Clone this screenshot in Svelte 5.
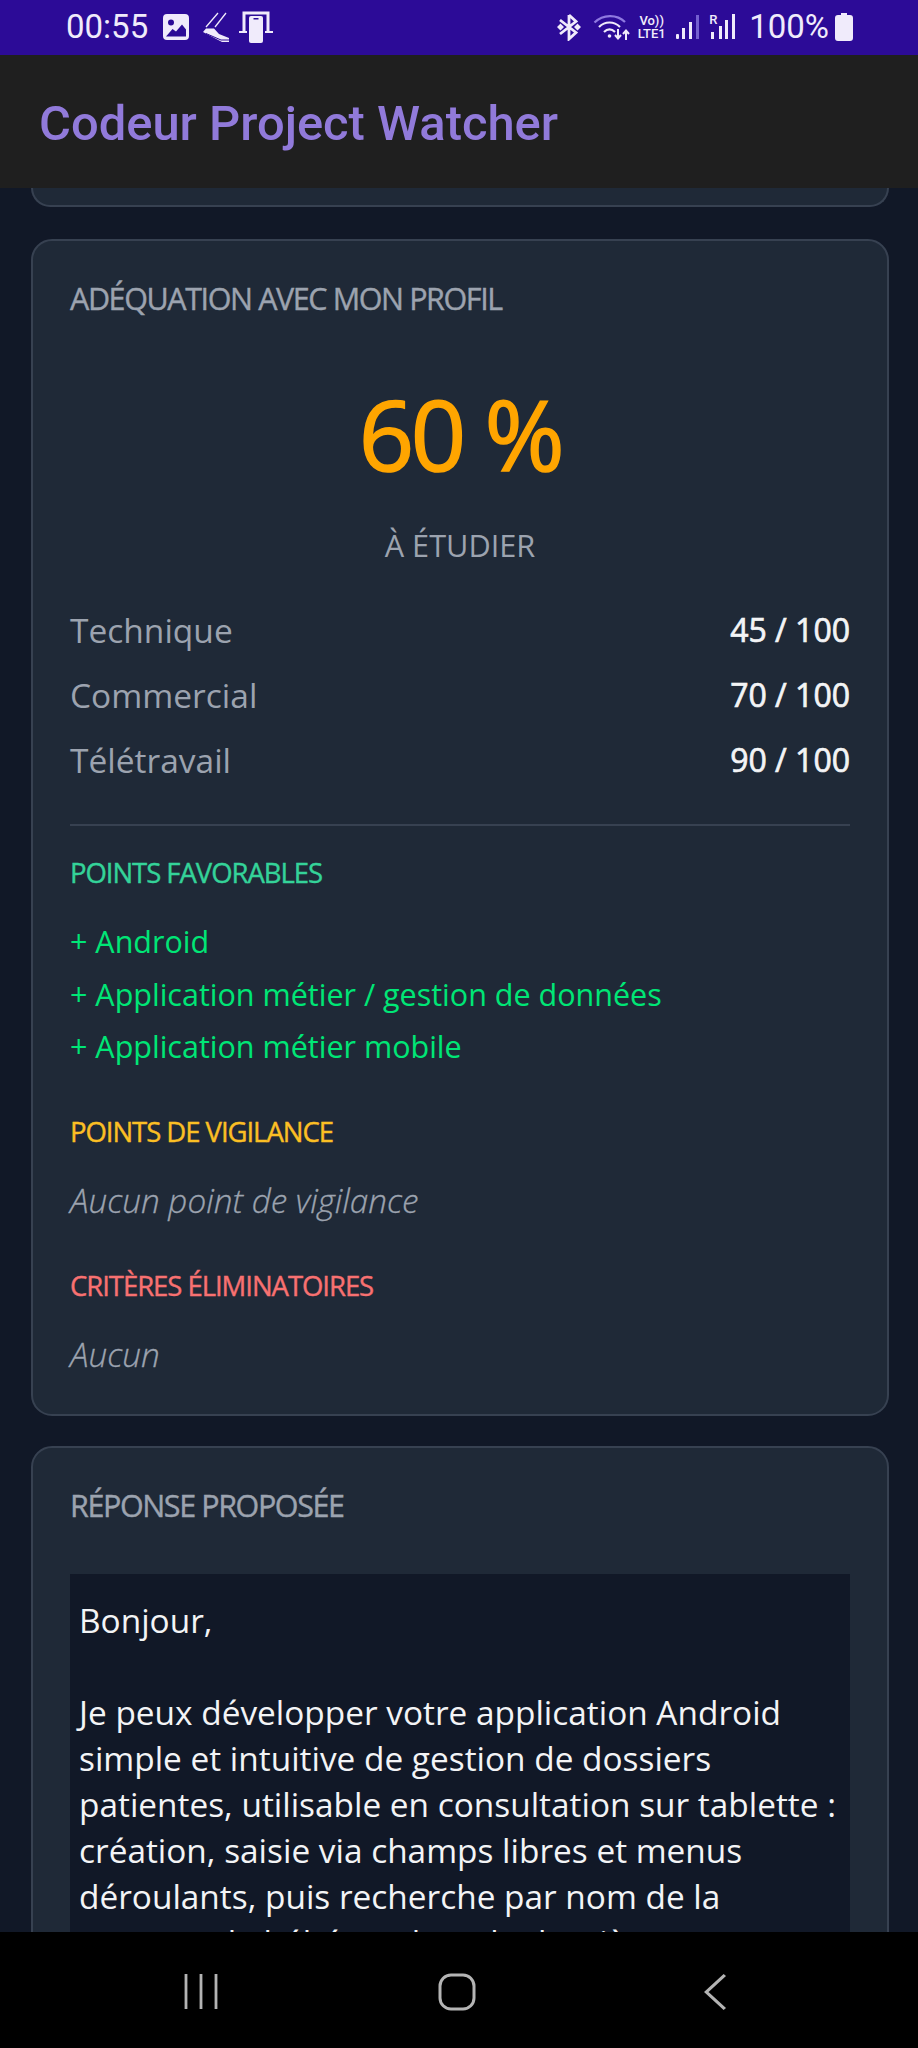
<script>
  const scores = [
    { label: 'Technique', value: '45 / 100' },
    { label: 'Commercial', value: '70 / 100' },
    { label: 'Télétravail', value: '90 / 100' }
  ];
  const favorable = ['Android', 'Application métier / gestion de données', 'Application métier mobile'];
</script>

<div class="phone">
  <header class="status">
    <div class="status-left">
      <span class="clock">00:55</span>
      <svg class="ic-gallery" viewBox="0 0 26 26"><path fill-rule="evenodd" fill="#f0ebfb" d="M4 0h18a4 4 0 0 1 4 4v18a4 4 0 0 1-4 4H4a4 4 0 0 1-4-4V4a4 4 0 0 1 4-4zM8 5.500a3 3 0 1 0 0 6 3 3 0 0 0 0-6zM3 22.500h20v-7l-4-5-6 7-3.500-2.500z"/></svg>
      <svg class="ic-shoe" viewBox="0 0 28 31"><path d="M16 1 4 15M24 1 13 15" stroke="#f0ebfb" stroke-width="1.300" fill="none"/><path fill="#f0ebfb" d="M1 20 4 16.500 12 16.500 17 22 27 26 27 30 20 30z"/><path d="M4 21.500l15 6.500h8" stroke="#2c0b97" stroke-width="1" fill="none"/></svg>
      <svg class="ic-phone" viewBox="0 0 34 32"><path d="M5 22V2h24v20" stroke="#f0ebfb" stroke-width="3" fill="none"/><rect x="10" y="5" width="14" height="27" rx="2" fill="#f0ebfb"/><rect x="14.500" y="7" width="5" height="1.500" fill="#2c0b97"/><path d="M0 21h8M26 21h8" stroke="#f0ebfb" stroke-width="2"/></svg>
    </div>
    <div class="status-right">
      <svg class="ic-bt" viewBox="0 0 24 28"><path d="M12 2v24l7-6.500L3 7M12 2l7 6.500L3 21" fill="none" stroke="#f0ebfb" stroke-width="2.800"/><path d="M0 14l3.500-3.500L7 14l-3.500 3.500zM17 14l3.500-3.500L24 14l-3.500 3.500z" fill="#f0ebfb"/></svg>
      <svg class="ic-wifi" viewBox="0 0 38 28"><path d="M1.500 9.500C10 1 24 1 32 9" fill="none" stroke="#8f79e0" stroke-width="2.200"/><path d="M6 14c6-6 15-6 21 0M11 19c3.500-3.500 7.500-3.500 11 0" fill="none" stroke="#f0ebfb" stroke-width="2.200"/><circle cx="16.500" cy="23" r="1.800" fill="#f0ebfb"/><path d="M25 16v9m-3-3 3 3.500 3-3.500M33 27V18m-3 3 3-3.500 3 3.500" fill="none" stroke="#f0ebfb" stroke-width="2"/></svg>
      <span class="volte"><span>Vo))</span><span>LTE1</span></span>
      <svg class="ic-sig" viewBox="0 0 24 26"><g fill="#f0ebfb"><rect x="0" y="20" width="3" height="5" rx="1"/><rect x="6" y="14" width="3" height="11"/><rect x="13" y="8" width="3" height="17"/></g><rect x="20" y="1" width="3" height="24" fill="#7560d0"/></svg>
      <span class="roam"><span class="r">R</span><svg class="ic-sig2" viewBox="0 0 26 26"><g fill="#f0ebfb"><rect x="2" y="18" width="3" height="7"/><rect x="10" y="12" width="3" height="13"/><rect x="16" y="6" width="3" height="19"/><rect x="23" y="0" width="3" height="25"/></g></svg></span>
      <span class="battery-text">100%</span>
      <svg class="ic-bat" viewBox="0 0 18 28"><path fill="#f0ebfb" d="M6 0h6v2h3a3 3 0 0 1 3 3v20a3 3 0 0 1-3 3H3a3 3 0 0 1-3-3V5a3 3 0 0 1 3-3h3z"/></svg>
    </div>
  </header>

  <div class="appbar"><h1>Codeur Project Watcher</h1></div>

  <main class="content">
    <div class="card-tail"></div>

    <section class="card">
      <h2 class="title">ADÉQUATION AVEC MON PROFIL</h2>
      <div class="score">60 %</div>
      <div class="verdict">À ÉTUDIER</div>
      <div class="rows">
        {#each scores as s}
          <div class="row"><span class="row-label">{s.label}</span><span class="row-value">{s.value}</span></div>
        {/each}
      </div>
      <hr />
      <h3 class="sub green">POINTS FAVORABLES</h3>
      <ul class="pts">
        {#each favorable as f}<li>+ {f}</li>{/each}
      </ul>
      <h3 class="sub amber">POINTS DE VIGILANCE</h3>
      <p class="none">Aucun point de vigilance</p>
      <h3 class="sub red">CRITÈRES ÉLIMINATOIRES</h3>
      <p class="none last">Aucun</p>
    </section>

    <section class="card">
      <h2 class="title">RÉPONSE PROPOSÉE</h2>
      <div class="reply">
        <p>Bonjour,</p>
        <p>Je peux développer votre application Android simple et intuitive de gestion de dossiers patientes, utilisable en consultation sur tablette : création, saisie via champs libres et menus déroulants, puis recherche par nom de la maman, de bébé ou date de dernière consultation.</p>
      </div>
    </section>
  </main>

  <nav class="navbar">
    <svg class="nav-recents" viewBox="0 0 34 38" preserveAspectRatio="none"><path d="M2 1v36M17 1v36M32 1v36" stroke="#b4b4b4" stroke-width="2.800" fill="none"/></svg>
    <svg class="nav-home" viewBox="0 0 38 38"><rect x="2" y="2" width="34" height="34" rx="11" fill="none" stroke="#b4b4b4" stroke-width="3"/></svg>
    <svg class="nav-back" viewBox="0 0 22 40" preserveAspectRatio="none"><path d="M20 2 3 20l17 18" fill="none" stroke="#b4b4b4" stroke-width="3"/></svg>
  </nav>
</div>

<style>
  :global(body) { margin: 0; background: #111827; }
  .phone { width: 918px; height: 2048px; display: flex; flex-direction: column; overflow: hidden; font-family: "Open Sans", sans-serif; }

  .status { height: 55px; flex: none; background: #2c0b97; display: flex; justify-content: space-between; align-items: center; padding: 0 65px 1px 66px; box-sizing: border-box; color: #f0ebfb; font-family: Roboto, sans-serif; }
  .status-left, .status-right { display: flex; align-items: center; }
  .clock { font-size: 33px; line-height: 36px; margin-right: 15px; }
  .ic-gallery { width: 26px; height: 26px; margin-right: 13px; }
  .ic-shoe { width: 28px; height: 31px; margin-right: 9px; }
  .ic-phone { width: 34px; height: 32px; }
  .ic-bt { width: 24px; height: 28px; margin-right: 12px; }
  .ic-wifi { width: 38px; height: 28px; margin-right: 4px; }
  .volte { display: flex; flex-direction: column; font-size: 13px; line-height: 13px; font-weight: 500; margin-right: 8px; align-items: center; width: 33px; }
  .ic-sig { width: 24px; height: 26px; margin-right: 9px; }
  .roam { position: relative; width: 26px; height: 26px; margin-right: 14px; }
  .r { position: absolute; left: 0; top: -1px; font-size: 13px; line-height: 14px; font-weight: 500; }
  .ic-sig2 { width: 26px; height: 26px; display: block; }
  .battery-text { font-size: 33px; line-height: 36px; margin-right: 6px; }
  .ic-bat { width: 18px; height: 28px; }

  .appbar { height: 133px; flex: none; background: #1f1f1f; display: flex; align-items: center; padding-left: 39px; }
  h1 { margin: 0; font-family: Roboto, sans-serif; font-weight: 500; font-size: 48.900px; line-height: 60px; color: #917ada; padding-top: 4px; }

  .content { flex: 1; min-height: 0; overflow: hidden; background: #111827; padding: 0 29px 0 31px; }
  .card-tail { height: 19px; box-sizing: border-box; background: #1f2937; border: 2px solid #374151; border-top: 0; border-radius: 0 0 21px 21px; margin-bottom: 32px; }
  .card { background: #1f2937; border: 2px solid #374151; border-radius: 21px; padding: 37px 37px 34px; margin-bottom: 30px; box-sizing: border-box; }

  .title { margin: 0; font-size: 30.500px; line-height: 40px; font-weight: 400; color: #9ca3af; letter-spacing: -1.400px; -webkit-text-stroke: 0.4px #9ca3af; }
  .score { margin-top: 55px; text-align: center; font-size: 97px; line-height: 120px; font-weight: 400; letter-spacing: -3.500px; color: #ffa500; -webkit-text-stroke: 1.600px #ffa500; }
  .verdict { margin-top: 32px; text-align: center; font-size: 30.700px; line-height: 40px; color: #9ca3af; }
  .rows { margin-top: 32px; }
  .row { display: flex; justify-content: space-between; height: 65px; align-items: center; font-size: 33.500px; }
  .row-label { color: #9ca3af; }
  .row-value { color: #f3f4f6; font-size: 32px; font-weight: 400; -webkit-text-stroke: 0.7px #f3f4f6; }
  hr { border: 0; height: 2px; background: #374151; margin: 32px 0 28px; }

  .sub { margin: 0; font-size: 27.500px; line-height: 38px; font-weight: 400; letter-spacing: -1.050px; -webkit-text-stroke: 0.4px currentColor; }
  .green { color: #34d399; }
  .amber { color: #fbbf24; margin-top: 40px; }
  .red { color: #f87171; margin-top: 41px; }
  .pts { list-style: none; margin: 23px 0 0; padding: 0; }
  .pts li { font-size: 30.500px; line-height: 52.500px; color: #00e676; }
  .none { margin: 23px 0 0; font-size: 33.300px; line-height: 52px; font-style: italic; font-weight: 300; color: #9ca3af; -webkit-text-stroke: 0.3px #9ca3af; }

  .reply { margin-top: 49px; background: #111827; padding: 23px 9px 9px; color: #f3f4f6; font-size: 33.400px; line-height: 46px; }
  .reply p { margin: 0 0 46px; }

  .navbar { height: 116px; flex: none; background: #000; position: relative; }
  .navbar svg { position: absolute; top: 41px; }
  .nav-recents { left: 184px; width: 34px; height: 37px; }
  .nav-home { left: 438px; width: 38px; height: 38px; }
  .nav-back { left: 703px; width: 24px; height: 38px; }
</style>
